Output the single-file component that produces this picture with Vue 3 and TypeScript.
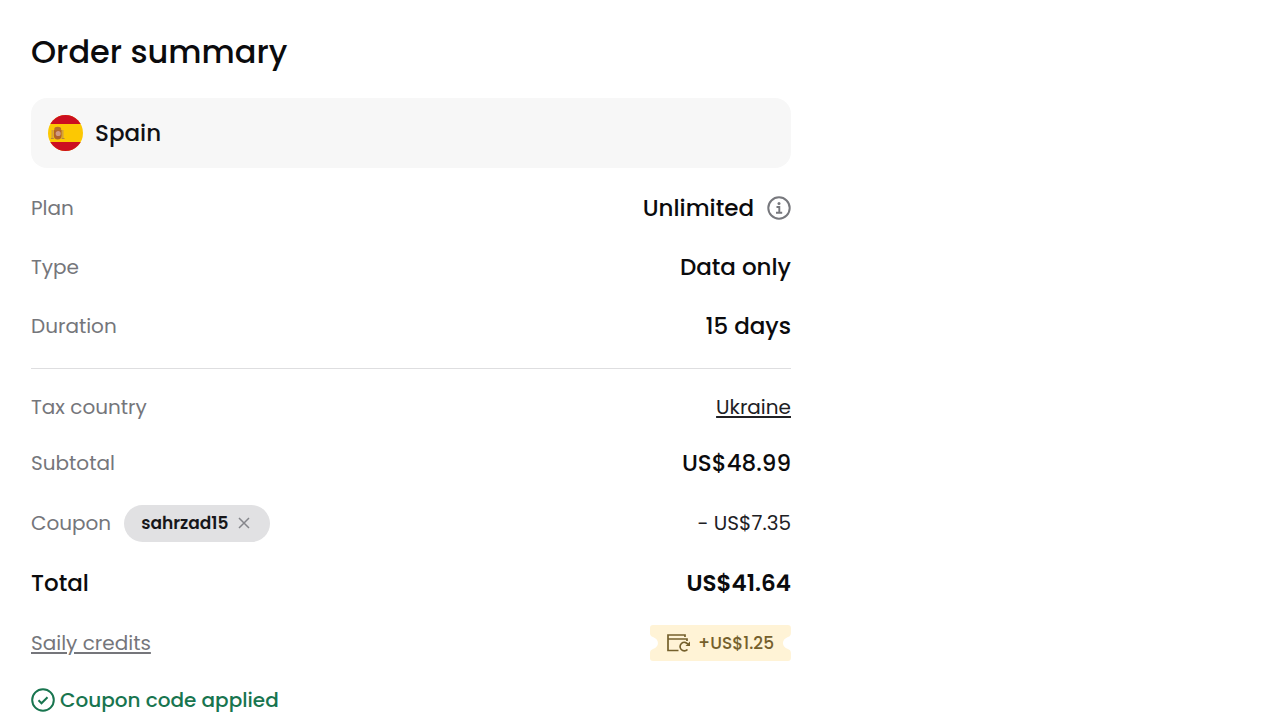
<script setup lang="ts">
import { ref } from 'vue'

interface Row {
  label: string
  value: string
  info?: boolean
}

const planRows: Row[] = [
  { label: 'Plan', value: 'Unlimited', info: true },
  { label: 'Type', value: 'Data only' },
  { label: 'Duration', value: '15 days' },
]

const coupon = ref('sahrzad15')
</script>

<template>
  <main class="summary">
    <h1>Order summary</h1>

    <section class="country">
      <svg class="flag" viewBox="0 0 36 36" preserveAspectRatio="none" aria-hidden="true">
        <defs>
          <clipPath id="round"><circle cx="18" cy="18" r="18" /></clipPath>
        </defs>
        <g clip-path="url(#round)">
          <rect width="36" height="36" fill="#fcc803" />
          <rect width="36" height="9" fill="#cc0e20" />
          <rect y="27" width="36" height="9" fill="#cc0e20" />
          <path d="M3.500 15h2v8h-2zM14 15h2v8h-2z" fill="#d3a23c" />
          <path d="M6 15h8v5.500a4 4 0 0 1-8 0z" fill="#b0622a" />
          <path d="M6.500 14q0-2.200 3.500-2.200t3.500 2.200v1.500h-7z" fill="#b8702c" />
          <circle cx="10.500" cy="18.500" r="2.600" fill="#cf9a84" />
          <path d="M3 23h3v1H3zM14 23h3v1h-3z" fill="#b58440" />
        </g>
      </svg>
      <span>Spain</span>
    </section>

    <dl class="rows">
      <div v-for="row in planRows" :key="row.label" class="row">
        <dt>{{ row.label }}</dt>
        <dd class="strong">
          {{ row.value }}
          <button v-if="row.info" type="button" class="icon-button" aria-label="Plan details">
            <svg class="info" viewBox="0 0 24 24" fill="none" stroke="#77787d" aria-hidden="true">
              <circle cx="12" cy="12" r="10.700" stroke-width="2" />
              <path d="M9.500 11h2.800v5.500M9 16.800h6.200" stroke-width="1.900" />
              <circle cx="12" cy="7.500" r="1.500" fill="#77787d" stroke="none" />
            </svg>
          </button>
        </dd>
      </div>
    </dl>

    <hr />

    <dl class="rows costs">
      <div class="row tax">
        <dt>Tax country</dt>
        <dd><a href="#tax-country">Ukraine</a></dd>
      </div>
      <div class="row">
        <dt>Subtotal</dt>
        <dd class="strong">US$48.99</dd>
      </div>
      <div v-if="coupon" class="row">
        <dt>
          Coupon
          <span class="chip">
            {{ coupon }}
            <button type="button" class="icon-button" aria-label="Remove coupon" @click="coupon = ''">
              <svg class="close" viewBox="0 0 12 12" fill="none" stroke="#85868b" stroke-width="1.500" aria-hidden="true">
                <path d="M1 1l10 10M11 1L1 11" />
              </svg>
            </button>
          </span>
        </dt>
        <dd>- US$7.35</dd>
      </div>
      <div class="row total">
        <dt>Total</dt>
        <dd>US$41.64</dd>
      </div>
      <div class="row">
        <dt><a href="#credits">Saily credits</a></dt>
        <dd class="credit">
          <svg class="ticket" viewBox="0 0 142 36" preserveAspectRatio="none" aria-hidden="true">
            <path d="M3 0H139Q142 0 142 3V8Q142 11 139 12Q134 14 134 18T139 24Q142 25 142 28V33Q142 36 139 36H3Q0 36 0 33V28Q0 25 3 24Q8 22 8 18T3 12Q0 11 0 8V3Q0 0 3 0Z" fill="#fff3d6" />
          </svg>
          <svg class="wallet" viewBox="0 0 24 20" fill="none" stroke="#75602c" stroke-width="1.700" aria-hidden="true">
            <path d="M18 4V2H1V17.500H11.500M1.500 6H20V8" />
            <path d="M20.500 16.500a4.300 4.300 0 1 1 .3-5.500" />
            <path d="M23 8.500v4.500h-4.500z" fill="#75602c" stroke="none" />
          </svg>
          <span>+US$1.25</span>
        </dd>
      </div>
    </dl>

    <p v-if="coupon" class="applied" role="status">
      <svg class="check" viewBox="0 0 24 24" fill="none" stroke="#18754f" stroke-width="2" aria-hidden="true">
        <circle cx="12" cy="12" r="10.800" />
        <path d="M7.500 12.300l3 3 6-6" />
      </svg>
      Coupon code applied
    </p>
  </main>
</template>

<style>
body {
  background: #fff;
}
</style>

<style scoped>
.summary {
  box-sizing: border-box;
  max-width: 822px;
  padding: 30px 31px 0;
  font-family: Poppins, Inter, "Open Sans", sans-serif;
  font-size: 20px;
  line-height: 28px;
  color: #202024;
}

h1 {
  margin: 0 0 24px;
  font-size: 32px;
  line-height: 44px;
  font-weight: 500;
  color: #0b0b0d;
}

.country {
  display: flex;
  align-items: center;
  gap: 12px;
  padding: 17px;
  margin-bottom: 21px;
  border-radius: 16px;
  background: #f7f7f7;
  font-size: 23px;
  font-weight: 500;
  color: #111114;
}

.flag {
  width: 35px;
  height: 36px;
}

.rows {
  display: flex;
  flex-direction: column;
  gap: 22px;
  margin: 0;
}

.row {
  display: flex;
  align-items: center;
  justify-content: space-between;
  min-height: 37px;
}

.costs .row {
  min-height: 38px;
}

.costs .tax {
  min-height: 30px;
}

dt,
dd {
  display: flex;
  align-items: center;
  gap: 13px;
  margin: 0;
}

dt {
  color: #75767b;
}

.strong,
.total dt,
.total dd {
  font-size: 23px;
  font-weight: 500;
  color: #0b0b0d;
}

.total dd {
  font-weight: 600;
}

a {
  color: inherit;
  text-underline-offset: 2px;
}

hr {
  height: 1px;
  margin: 24px 0 23px;
  border: 0;
  background: #dedee0;
}

.icon-button {
  display: flex;
  padding: 0;
  border: 0;
  background: none;
  cursor: pointer;
}

.info,
.check {
  width: 24px;
  height: 24px;
}

.chip {
  display: flex;
  align-items: center;
  gap: 10px;
  height: 37px;
  padding: 0 20px 0 17px;
  border-radius: 19px;
  background: #e1e1e3;
  font-size: 17px;
  font-weight: 600;
  color: #17171a;
}

.close {
  width: 12px;
  height: 12px;
}

.credit {
  position: relative;
  gap: 7px;
  height: 36px;
  padding: 0 17px;
  font-size: 17px;
  font-weight: 500;
  color: #75602c;
}

.ticket {
  position: absolute;
  inset: 0;
  width: 100%;
  height: 100%;
}

.wallet {
  position: relative;
  width: 24px;
  height: 20px;
}

.credit span {
  position: relative;
}

.applied {
  display: flex;
  align-items: center;
  gap: 5px;
  margin: 24px 0 0;
  font-weight: 500;
  color: #18754f;
}
</style>
